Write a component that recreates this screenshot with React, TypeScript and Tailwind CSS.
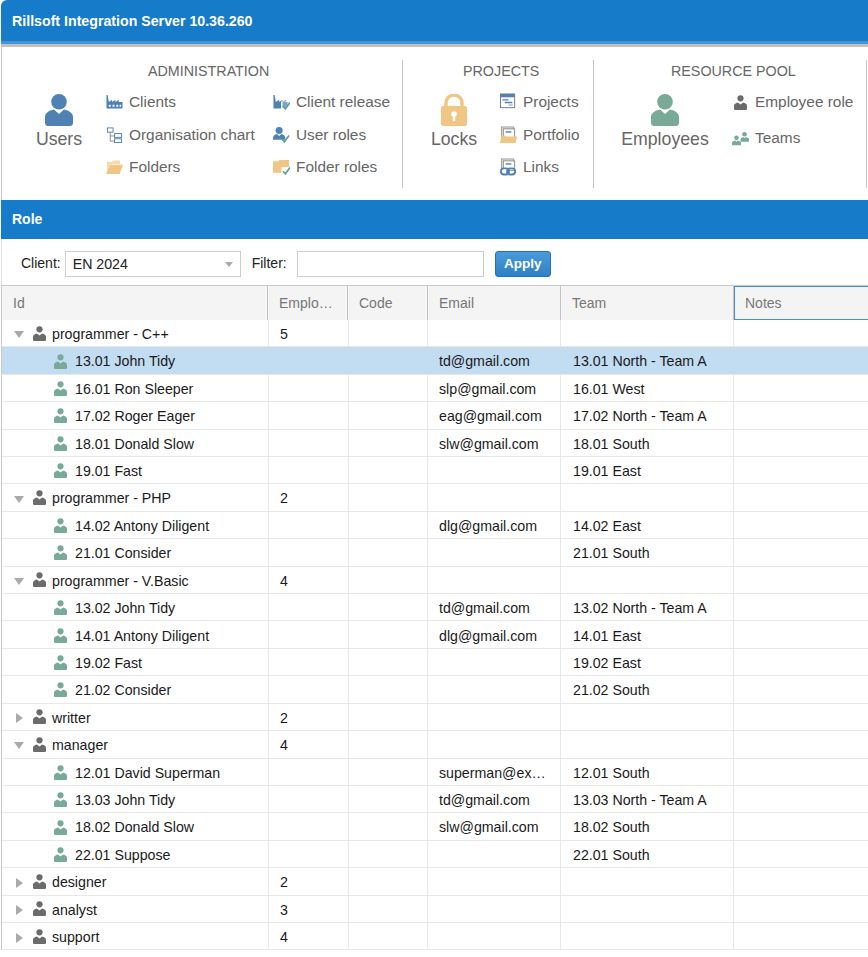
import type { ReactNode } from 'react'

const BLUE = '#4f81b5'
const GOLD = '#efc684'
const GREEN = '#79a997'
const CHECK = '#5fa58b'
const GREY = '#6b6b6b'

function Person({ color, className }: { color: string; className: string }) {
  return (
    <svg viewBox="0 0 28 32" className={className} fill={color}>
      <circle cx="14" cy="7.800" r="7.800" />
      <path d="M0 29v-6c0-4 4-6.500 9-7.500l5 4.500 5-4.500c5 1 9 3.500 9 7.500v6c0 2-1.500 3-3 3H3c-1.500 0-3-1-3-3z" />
    </svg>
  )
}

// smaller head and a clear gap, the way the 16px version of the icon reads
function SmallPerson({ color, className }: { color: string; className: string }) {
  return (
    <svg viewBox="0 0 13 15" className={className} fill={color}>
      <circle cx="6.500" cy="3.300" r="3.100" />
      <path d="M0 13.500v-2.700c0-1.800 1.800-2.800 3.900-3.300l2.600 2 2.600-2c2.100.5 3.900 1.500 3.900 3.300v2.700c0 1-.6 1.500-1.400 1.500H1.400C.6 15 0 14.500 0 13.500z" />
    </svg>
  )
}

function Check({ x = 9, y = 10 }: { x?: number; y?: number }) {
  return (
    <path
      d={`M${x} ${y + 3.500}l2.500 2.700 5-6.700`}
      fill="none"
      stroke={CHECK}
      strokeWidth="1.800"
    />
  )
}

function Factory({ checked }: { checked?: boolean }) {
  return (
    <svg viewBox="0 0 18 18" className="h-[18px] w-[18px]">
      <path d="M.5 16V1.500h1.200L3 9l3.500-2.500V9L10 6.500V9l3.500-2.500V9H17.500v7z" fill={BLUE} />
      {checked ? (
        <>
          <path d="M8.500 8.500H18V18H8.500z" fill="#fff" />
          <path d="M10 9h5.500v3l-2.500 3h-3z" fill="#7fa6cd" />
          <Check x={10.500} y={10} />
        </>
      ) : (
        <path d="M3 12h2v2H3zM7 12h2v2H7zM11 12h2v2h-2zM14.500 12h1.500v2h-1.500z" fill="#fff" />
      )}
    </svg>
  )
}

function OrgChart() {
  return (
    <svg viewBox="0 0 18 18" className="h-[18px] w-[18px]" fill="#fff">
      <path d="M4.500 6v9.500h4M4.500 10h4" fill="none" stroke="#888" strokeWidth="1" />
      <rect x="1.500" y="1.500" width="6" height="4.500" stroke={BLUE} />
      <rect x="9" y="7.500" width="7.500" height="4" stroke={BLUE} />
      <rect x="9" y="13" width="7.500" height="4" stroke={BLUE} />
    </svg>
  )
}

function Folder({ checked }: { checked?: boolean }) {
  if (checked) {
    return (
      <svg viewBox="0 0 18 18" className="h-[18px] w-[18px]">
        <path d="M0 3h5.500L7 1.500h10V15H0z" fill={GOLD} />
        <path d="M9 9h9v9H9z" fill="#fff" />
        <Check x={10.500} y={10} />
      </svg>
    )
  }
  return (
    <svg viewBox="0 0 18 18" className="h-[18px] w-[18px]">
      <path d="M1 15V3.500h5L7.500 2H15v4H5z" fill="#f3dcb4" />
      <path d="M0 16.500h14.500L18 6.500H4.500z" fill={GOLD} />
    </svg>
  )
}

function UserRoles() {
  return (
    <svg viewBox="0 0 18 18" className="h-[18px] w-[18px]">
      <circle cx="6.500" cy="4.200" r="3.700" fill={BLUE} />
      <path d="M0 14v-2c0-2 2-3.500 4-4l2.500 2 2.500-2c2 .5 4 2 4 4v2z" fill={BLUE} />
      <Check x={9.500} y={10} />
    </svg>
  )
}

function Windows({ children, stacked }: { children: ReactNode; stacked?: boolean }) {
  return (
    <svg viewBox="0 0 18 18" className="h-[18px] w-[18px]">
      {stacked ? (
        <>
          <rect x="1.500" y=".5" width="13" height="11" fill="#e6e6e6" stroke="#999" />
          <rect x="3.500" y="2.500" width="12" height="10" fill="#fff" stroke="#888" />
        </>
      ) : (
        <>
          <rect x=".5" y=".5" width="15" height="14.500" fill="#fff" stroke="#777" />
          <rect x=".5" y=".5" width="15" height="3.500" fill={BLUE} />
        </>
      )}
      {children}
    </svg>
  )
}

function Projects() {
  return (
    <Windows>
      <path d="M2.500 6h6.500v1.500H2.500zM5 8.700h8v1.500H5z" fill={BLUE} />
      <path d="M9 11.500h4.500V13H9z" fill="#9fb9d5" />
    </Windows>
  )
}

function Portfolio() {
  return (
    <Windows stacked>
      <path d="M6 5h6v1.500H6z" fill={BLUE} />
      <path d="M0 17.500 1.500 9.500H5l1 1h12l-1.500 7z" fill={GOLD} />
    </Windows>
  )
}

function Links() {
  return (
    <Windows stacked>
      <path d="M6 5h6v1.500H6z" fill={BLUE} />
      <rect x="1" y="10.500" width="8.500" height="6.500" rx="3.200" fill="#fff" stroke={BLUE} strokeWidth="2" />
      <rect x="7.500" y="10.500" width="8.500" height="6.500" rx="3.200" fill="none" stroke={BLUE} strokeWidth="2" />
    </Windows>
  )
}

function Lock() {
  return (
    <svg viewBox="0 0 26 32" className="h-[32px] w-[26px]">
      <path d="M5 14V9a8 8 0 0 1 16 0v5" fill="none" stroke={GOLD} strokeWidth="3.500" />
      <rect y="12" width="26" height="20" rx="2" fill={GOLD} />
      <circle cx="13" cy="20" r="2.800" fill="#fff" />
      <path d="M11.800 21h2.400v6h-2.400z" fill="#fff" />
    </svg>
  )
}

function Teams() {
  return (
    <svg viewBox="0 0 19 15" className="h-[15px] w-[19px]" fill={GREEN}>
      <circle cx="5" cy="6.800" r="2.600" />
      <path d="M0 15v-2.500c0-1.500 1.500-2.300 3.500-2.800L5 11l1.500-1.300c2 .5 3.500 1.300 3.500 2.800V15z" />
      <circle cx="14" cy="2.800" r="2.600" />
      <path d="M9.500 11V8.500c0-1.500 1.500-2.300 3-2.800L14 7l1.500-1.300c2 .5 3.500 1.300 3.500 2.800V11z" />
    </svg>
  )
}

function RibbonItem({ icon, label }: { icon: ReactNode; label: string }) {
  return (
    <div className="flex items-center gap-[6px] whitespace-nowrap">
      <span className="flex w-[17px] shrink-0 items-center justify-center">{icon}</span>
      <span>{label}</span>
    </div>
  )
}

function BigButton({ icon, label, className }: { icon: ReactNode; label: string; className: string }) {
  return (
    <div className={`flex shrink-0 flex-col items-center pt-[12px] text-[17.700px] leading-[21px] ${className}`}>
      <div className="mb-[2px] flex h-[32px] items-center">{icon}</div>
      <span className="mt-[1px]">{label}</span>
    </div>
  )
}

function Ribbon() {
  return (
    <div className="flex h-[153px] items-start border-l border-[#c9c9c9] pt-[13px] text-[15.400px] leading-[18px] text-[#666]">
      <section className="h-[128px] w-[401px] shrink-0 border-r border-[#c4c4c4]">
        <h3 className="pl-[146px] text-[14.300px] leading-[22px] font-normal">ADMINISTRATION</h3>
        <div className="flex">
          <BigButton
            icon={<Person color={BLUE} className="h-[32px] w-[28px]" />}
            label="Users"
            className="ml-[14px] w-[86px]"
          />
          <div className="ml-[4px] grid grid-cols-[167px_auto] auto-rows-[32.5px] pt-[4px]">
            <RibbonItem icon={<Factory />} label="Clients" />
            <RibbonItem icon={<Factory checked />} label="Client release" />
            <RibbonItem icon={<OrgChart />} label="Organisation chart" />
            <RibbonItem icon={<UserRoles />} label="User roles" />
            <RibbonItem icon={<Folder />} label="Folders" />
            <RibbonItem icon={<Folder checked />} label="Folder roles" />
          </div>
        </div>
      </section>
      <section className="h-[128px] w-[191px] shrink-0 border-r border-[#c4c4c4]">
        <h3 className="pl-[60px] text-[14.300px] leading-[22px] font-normal">PROJECTS</h3>
        <div className="flex">
          <BigButton icon={<Lock />} label="Locks" className="ml-[21px] w-[60px]" />
          <div className="ml-[16px] grid auto-rows-[32.5px] pt-[4px]">
            <RibbonItem icon={<Projects />} label="Projects" />
            <RibbonItem icon={<Portfolio />} label="Portfolio" />
            <RibbonItem icon={<Links />} label="Links" />
          </div>
        </div>
      </section>
      <section className="h-[128px] w-[273px] shrink-0 border-r border-[#c4c4c4]">
        <h3 className="pl-[77px] text-[14.300px] leading-[22px] font-normal">RESOURCE POOL</h3>
        <div className="flex">
          <BigButton
            icon={<Person color={GREEN} className="h-[32px] w-[28px]" />}
            label="Employees"
            className="ml-[25px] w-[92px]"
          />
          <div className="ml-[21px] grid auto-rows-[36px] pt-[2px]">
            <RibbonItem icon={<SmallPerson color={GREY} className="h-[15px] w-[13px]" />} label="Employee role" />
            <RibbonItem icon={<Teams />} label="Teams" />
          </div>
        </div>
      </section>
    </div>
  )
}

function Toolbar() {
  return (
    <div className="flex h-[46px] items-start border-l border-[#e4e4e4] pt-[12px] pl-[19px] text-[14px] leading-[24px] text-[#222]">
      <span>Client:</span>
      <div className="ml-[4px] flex h-[26px] w-[176px] items-center justify-between border border-[#ccc] px-[7px] text-[14.200px] text-[#222]">
        EN 2024
        <span className="h-0 w-0 border-x-[4.500px] border-t-[5px] border-x-transparent border-t-[#aaa]" />
      </div>
      <span className="ml-[11px]">Filter:</span>
      <div className="ml-[10px] h-[26px] w-[187px] border border-[#ccc]" />
      <button className="ml-[11px] h-[26px] w-[56px] rounded-[3px] border border-[#2474b5] bg-gradient-to-b from-[#4a9bdb] to-[#2d81c4] text-[13.500px] leading-[22px] font-bold text-white">
        Apply
      </button>
    </div>
  )
}

const COLS = ['w-[267px]', 'w-[80px]', 'w-[79px]', 'w-[133px]', 'w-[173px]', 'flex-1']
const HEAD_COLS = ['w-[266px]', 'w-[80px]', 'w-[80px]', 'w-[133px]', 'w-[173px]']
const CELL_PAD = ['pl-[11px]', 'pl-[11px]', 'pl-[11px]', 'pl-[12px]']

function Header() {
  const heads = ['Id', 'Emplo…', 'Code', 'Email', 'Team']
  return (
    <div className="flex h-[35px] border-t border-[#c9c9c9] bg-[#f4f4f4] text-[14px] text-[#777]">
      {heads.map((h, i) => (
        <div
          key={h}
          className={`${HEAD_COLS[i]} flex items-center border-r border-[#c4c4c4] pl-[11px]`}
        >
          {h}
        </div>
      ))}
      <div className="flex flex-1 items-center border border-r-0 border-[#4192d3] pl-[10px]">Notes</div>
    </div>
  )
}

type RowData = {
  id: string
  group?: 'open' | 'closed'
  count?: number
  email?: string
  team?: string
  selected?: boolean
}

const ROWS: RowData[] = [
  { id: 'programmer - C++', group: 'open', count: 5 },
  { id: '13.01 John Tidy', email: 'td@gmail.com', team: '13.01 North - Team A', selected: true },
  { id: '16.01 Ron Sleeper', email: 'slp@gmail.com', team: '16.01 West' },
  { id: '17.02 Roger Eager', email: 'eag@gmail.com', team: '17.02 North - Team A' },
  { id: '18.01 Donald Slow', email: 'slw@gmail.com', team: '18.01 South' },
  { id: '19.01 Fast', team: '19.01 East' },
  { id: 'programmer - PHP', group: 'open', count: 2 },
  { id: '14.02 Antony Diligent', email: 'dlg@gmail.com', team: '14.02 East' },
  { id: '21.01 Consider', team: '21.01 South' },
  { id: 'programmer - V.Basic', group: 'open', count: 4 },
  { id: '13.02 John Tidy', email: 'td@gmail.com', team: '13.02 North - Team A' },
  { id: '14.01 Antony Diligent', email: 'dlg@gmail.com', team: '14.01 East' },
  { id: '19.02 Fast', team: '19.02 East' },
  { id: '21.02 Consider', team: '21.02 South' },
  { id: 'writter', group: 'closed', count: 2 },
  { id: 'manager', group: 'open', count: 4 },
  { id: '12.01 David Superman', email: 'superman@ex…', team: '12.01 South' },
  { id: '13.03 John Tidy', email: 'td@gmail.com', team: '13.03 North - Team A' },
  { id: '18.02 Donald Slow', email: 'slw@gmail.com', team: '18.02 South' },
  { id: '22.01 Suppose', team: '22.01 South' },
  { id: 'designer', group: 'closed', count: 2 },
  { id: 'analyst', group: 'closed', count: 3 },
  { id: 'support', group: 'closed', count: 4 },
]

function Row({ row }: { row: RowData }) {
  const sep = row.selected ? 'border-r-0' : 'border-r border-[#e8e8e8]'
  const cells = [row.count, '', row.email, row.team]
  return (
    <div
      className={`flex h-[27.410px] items-stretch border-b border-[#e8e8e8] text-[14.200px] text-[#1a1a1a] ${
        row.selected ? 'bg-[#c2dcf2]' : ''
      }`}
    >
      <div className={`${COLS[0]} flex items-center pt-[3px] ${sep}`}>
        {row.group ? (
          <>
            <span className="flex w-[31px] justify-center pl-[3px]">
              {row.group === 'open' ? (
                <span className="h-0 w-0 border-x-[5px] border-t-[7px] border-x-transparent border-t-[#aaa]" />
              ) : (
                <span className="h-0 w-0 border-y-[5px] border-l-[7px] border-y-transparent border-l-[#aaa]" />
              )}
            </span>
            <SmallPerson color={GREY} className="-mt-[3px] h-[15px] w-[13px]" />
            <span className="ml-[6px]">{row.id}</span>
          </>
        ) : (
          <>
            <SmallPerson color={GREEN} className="-mt-[2px] ml-[52px] h-[15px] w-[13px]" />
            <span className="ml-[8px]">{row.id}</span>
          </>
        )}
      </div>
      {cells.map((c, i) => (
        <div key={i} className={`${COLS[i + 1]} flex items-center pt-[3px] ${CELL_PAD[i]} ${sep}`}>
          {c}
        </div>
      ))}
      <div className="flex-1" />
    </div>
  )
}

export default function App() {
  return (
    <div className="h-[957px] w-[868px] overflow-hidden bg-white font-['Liberation_Sans',Arial,sans-serif]">
      <div className="ml-[1px]">
        <div className="rounded-tl-[6px] border-b-[3px] border-[#4595d6] bg-[#167cc9]">
          <div className="flex h-[41px] items-center pt-[3px] pl-[11px] text-[14.200px] font-bold text-white">
            Rillsoft Integration Server 10.36.260
          </div>
        </div>
        <div className="h-[3px] bg-[#c0c0c0]" />
        <Ribbon />
        <div className="flex h-[39px] items-center bg-[#167cc9] pl-[11px] text-[14px] font-bold text-white">
          Role
        </div>
        <Toolbar />
        <div className="border-l border-[#c9c9c9]">
          <Header />
          {ROWS.map((row) => (
            <Row key={row.id} row={row} />
          ))}
        </div>
      </div>
    </div>
  )
}
